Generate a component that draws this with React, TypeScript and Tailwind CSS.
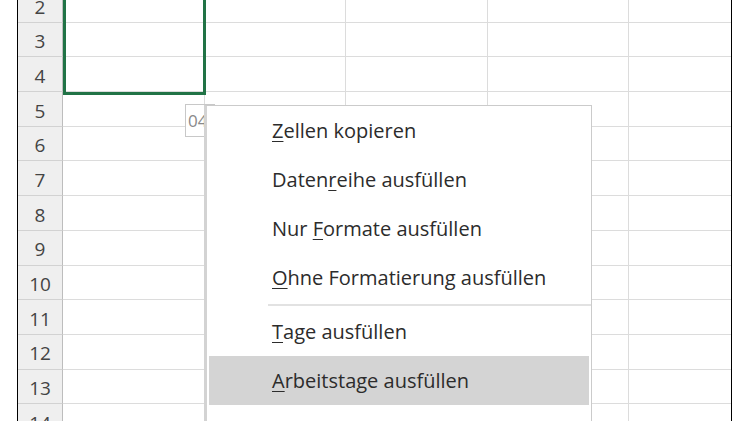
import type { ReactNode } from 'react';

const ROWS = [2, 3, 4, 5, 6, 7, 8, 9, 10, 11, 12, 13, 14];

// column widths (right grid line included) after the row header
const COLS = ['w-[142px]', 'w-[141px]', 'w-[142px]', 'w-[141px]'];

function SheetRow({ n }: { n: number }) {
  return (
    <div className="flex h-[34.7px] shrink-0">
      <div className="flex w-[45px] shrink-0 items-center justify-center border-r border-b border-r-[#bdbdbd] border-b-[#d2d2d2] bg-[#efefef] pt-[4px] text-[19px] text-[#444]">
        {n}
      </div>
      {COLS.map((w, i) => (
        <div key={i} className={`${w} shrink-0 border-r border-b border-[#dcdcdc]`} />
      ))}
      <div className="flex-1 border-b border-[#dcdcdc]" />
    </div>
  );
}

function MenuItem({ children, active }: { children: ReactNode; active?: boolean }) {
  return (
    <div
      className={`mx-[2px] flex h-[49px] shrink-0 items-center pl-[63px] text-[20px] text-[#2c2c2c] ${
        active ? 'bg-[#d4d4d4]' : ''
      }`}
    >
      <span className="whitespace-pre">{children}</span>
    </div>
  );
}

function Key({ children }: { children: ReactNode }) {
  return <span className="underline decoration-1 underline-offset-[3px]">{children}</span>;
}

export default function App() {
  return (
    <div
      className="relative flex h-[421px] w-[750px] overflow-hidden bg-white"
      style={{ fontFamily: '"Open Sans", "Noto Sans", sans-serif' }}
    >
      <div className="w-[17px] shrink-0" />
      <div className="w-[715px] shrink-0 overflow-hidden border-x border-black">
        <div className="-mt-[12px] flex flex-col">
          {ROWS.map((n) => (
            <SheetRow key={n} n={n} />
          ))}
        </div>
      </div>

      {/* selected range */}
      <div className="absolute top-[-20px] left-[63px] h-[115px] w-[143px] border-[3px] border-[#217346]" />

      {/* fill preview tag, mostly behind the menu */}
      <div className="absolute top-[104px] left-[185px] h-[33px] w-[30px] border border-[#c8c8c8] bg-white pt-[3px] pl-[2px] text-[17px] text-[#8a8a8a]">
        04
      </div>

      {/* auto-fill context menu */}
      <div className="absolute top-[105px] left-[204px] flex h-[340px] w-[388px] flex-col border border-l-[3px] border-[#cbcbcb] border-l-[#d3d3d3] bg-white">
        <MenuItem>
          <Key>Z</Key>ellen kopieren
        </MenuItem>
        <MenuItem>
          Daten<Key>r</Key>eihe ausfüllen
        </MenuItem>
        <MenuItem>
          Nur <Key>F</Key>ormate ausfüllen
        </MenuItem>
        <MenuItem>
          <Key>O</Key>hne Formatierung ausfüllen
        </MenuItem>
        <div className="flex h-[5px] shrink-0 items-center pl-[61px]">
          <div className="h-[2px] w-full bg-[#e2e2e2]" />
        </div>
        <MenuItem>
          <Key>T</Key>age ausfüllen
        </MenuItem>
        <MenuItem active>
          <Key>A</Key>rbeitstage ausfüllen
        </MenuItem>
        <MenuItem>
          <Key>M</Key>onate ausfüllen
        </MenuItem>
      </div>
    </div>
  );
}
